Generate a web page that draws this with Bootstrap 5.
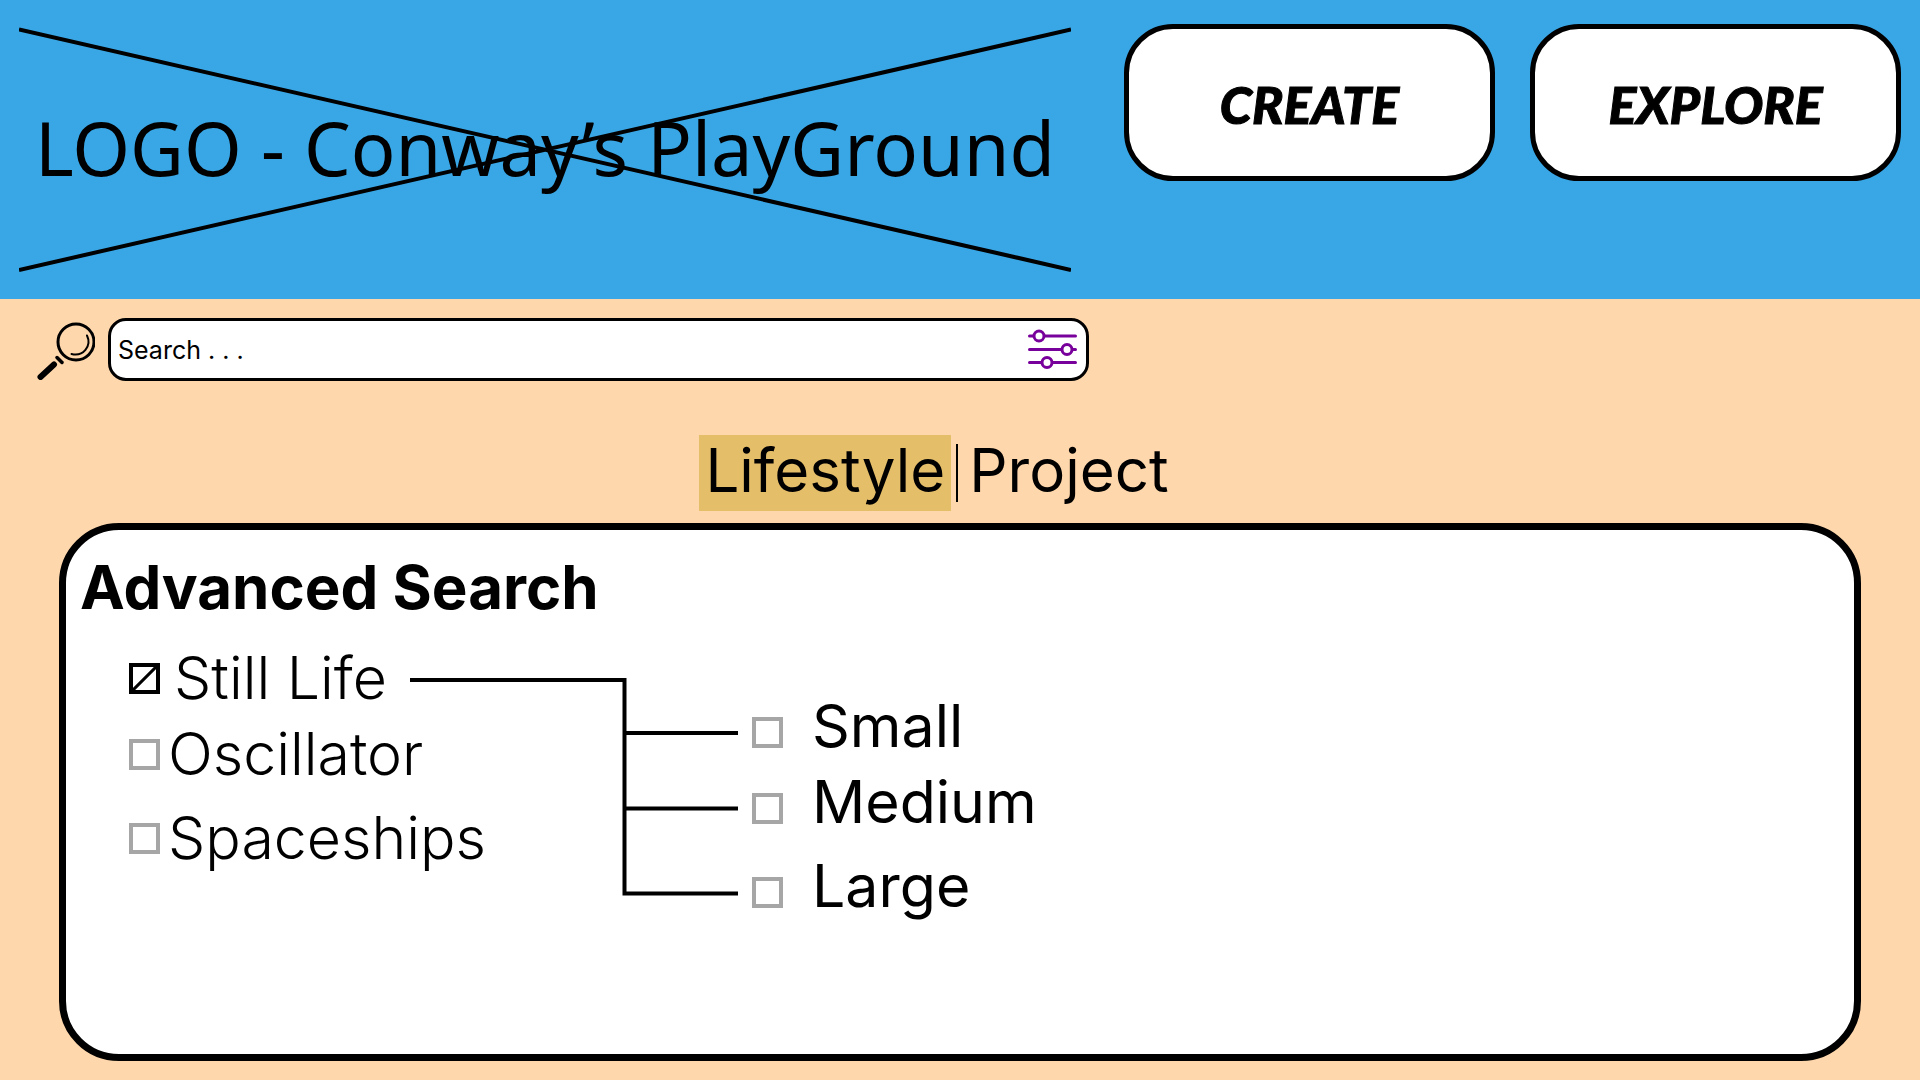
<!DOCTYPE html>
<html lang="en">
<head>
<meta charset="utf-8">
<meta name="viewport" content="width=device-width, initial-scale=1">
<title>Conway’s PlayGround</title>
<link href="https://cdn.jsdelivr.net/npm/bootstrap@5.3.0/dist/css/bootstrap.min.css" rel="stylesheet">
<style>
  body { background: #ffd7ac; color: #000; font-family: Inter, "Liberation Sans", sans-serif; }
  .site-header { background: #39a6e6; padding: 24px 19px 27px; gap: 53px; }
  .logo-box { min-height: 248px; }
  .logo-name { font-family: "Noto Sans", sans-serif; font-size: 74px; line-height: 80px; font-weight: 400; }
  .logo-cross { stroke: #000; stroke-width: 4; }
  .header-actions { gap: 35px; }
  .btn-pill { width: 371px; height: 157px; border: 5px solid #000; border-radius: 49px; background: #fff; color: #000; padding-top: 8px;
    font-family: Lato, sans-serif; font-size: 52px; font-weight: 900; font-style: italic; line-height: 60px; -webkit-text-stroke: 1px #000; }
  .btn-pill:hover { background: #eee; color: #000; border-color: #000; }
  .search-row { padding: 19px 37px 0; gap: 13px; }
  .search-box { flex: 0 1 981px; height: 63px; border: 3px solid #000; border-radius: 18px; background: #fff; padding: 0 8px 0 7px; }
  .search-box input { font-size: 25px; line-height: 32px; color: #000; }
  .search-box input::placeholder { color: #000; opacity: 1; }
  .kind-tabs { padding: 54px 46px 0 0; font-size: 60px; line-height: 70px; }
  .kind-tabs a { color: #000; text-decoration: none; padding: 0 6px 6px; }
  .kind-tabs a.active { background: #e5be69; }
  .tab-rule { width: 2px; height: 58px; background: #000; margin: 0 5px; }
  .panel { margin: 12px 59px 19px; border: 7px solid #000; border-radius: 60px; background: #fff; padding: 19px 14px; }
  .panel h2 { font-size: 60px; line-height: 76px; font-weight: 700; margin: 0; }
  .option-area { padding: 21px 0 0 49px; }
  .option-list { display: flex; flex-direction: column; gap: 12px; font-size: 59px; line-height: 64px; }
  .option-list > :last-child { margin-top: 8px; }
  .option-row { height: 64px; }
  .kind-list { width: 281px; font-weight: 350; }
  .size-list { margin: 54px 0 0 14px; }
  .tick { appearance: none; flex: none; width: 31px; height: 31px; margin: 0 8px 0 0; border: 4px solid #a6a6a6; background: #fff; }
  .tick:checked { border-color: #000; margin-right: 14px;
    background: linear-gradient(to bottom right, #fff 45%, #000 46%, #000 54%, #fff 55%); }
  .size-list .tick { margin-right: 29px; }
  .size-list label { padding-bottom: 12px; }
  .branch { margin-top: 32px; flex: none; }
</style>
</head>
<body class="d-flex flex-column min-vh-100">
<header class="site-header d-flex align-items-start">
  <div class="logo-box position-relative flex-grow-1 d-flex align-items-center justify-content-center">
    <h1 class="logo-name m-0 text-nowrap">LOGO - Conway’s PlayGround</h1>
    <svg class="logo-cross position-absolute top-0 start-0 w-100 h-100" viewBox="0 0 1052 248" preserveAspectRatio="none" aria-hidden="true">
      <path d="M0 5.500L1052 246M0 246L1052 5.500" fill="none"/>
    </svg>
  </div>
  <div class="header-actions d-flex">
    <button type="button" class="btn btn-pill">CREATE</button>
    <button type="button" class="btn btn-pill">EXPLORE</button>
  </div>
</header>
<main class="flex-grow-1 d-flex flex-column">
  <form class="search-row d-flex align-items-center" role="search">
    <label for="q" class="flex-shrink-0 d-flex" aria-label="Search">
      <svg width="58" height="60" viewBox="0 0 58 60" fill="none" stroke="#000" stroke-linecap="round">
        <circle cx="39" cy="22" r="18" stroke-width="3"/>
        <path d="M50 15.500C55 26 46 37 34.500 34" stroke-width="2"/>
        <path d="M20 37.500L25 42.500" stroke-width="3.500"/>
        <path d="M17 44.500L3.500 57" stroke-width="6"/>
      </svg>
    </label>
    <div class="search-box d-flex align-items-center">
      <input id="q" type="text" class="border-0 bg-transparent p-0 flex-grow-1" placeholder="Search . . .">
      <button type="button" class="btn border-0 p-0 d-flex" aria-label="Filters">
        <svg width="51" height="42" viewBox="0 0 51 42" fill="#fff" stroke="#78009b" stroke-width="3" stroke-linecap="round">
          <path d="M2.500 7H48.500M2.500 20.500H48.500M2.500 33.500H48.500"/>
          <circle cx="12" cy="7" r="5"/><circle cx="40" cy="20.500" r="5"/><circle cx="20" cy="33.500" r="5"/>
        </svg>
      </button>
    </div>
  </form>
  <nav class="kind-tabs d-flex justify-content-center align-items-center">
    <a href="#lifestyle" class="active" aria-current="page">Lifestyle</a>
    <span class="tab-rule"></span>
    <a href="#project">Project</a>
  </nav>
  <section class="panel flex-grow-1" id="lifestyle">
    <h2>Advanced Search</h2>
    <div class="option-area d-flex align-items-start">
      <div class="option-list kind-list text-nowrap">
        <div class="option-row d-flex align-items-center"><input class="tick" type="checkbox" id="still" checked><label for="still">Still Life</label></div>
        <div class="option-row d-flex align-items-center"><input class="tick" type="checkbox" id="osc"><label for="osc">Oscillator</label></div>
        <div class="option-row d-flex align-items-center"><input class="tick" type="checkbox" id="ships"><label for="ships">Spaceships</label></div>
      </div>
      <svg class="branch" width="328" height="218" viewBox="0 0 328 218" fill="none" stroke="#000" stroke-width="4" aria-hidden="true">
        <path d="M0 2H214.500V215.500H328M214.500 55H328M214.500 130.500H328"/>
      </svg>
      <div class="option-list size-list text-nowrap">
        <div class="option-row d-flex align-items-center"><input class="tick" type="checkbox" id="small-size"><label for="small-size">Small</label></div>
        <div class="option-row d-flex align-items-center"><input class="tick" type="checkbox" id="medium-size"><label for="medium-size">Medium</label></div>
        <div class="option-row d-flex align-items-center"><input class="tick" type="checkbox" id="large-size"><label for="large-size">Large</label></div>
      </div>
    </div>
  </section>
</main>
<script src="https://cdn.jsdelivr.net/npm/bootstrap@5.3.0/dist/js/bootstrap.bundle.min.js"></script>
</body>
</html>
